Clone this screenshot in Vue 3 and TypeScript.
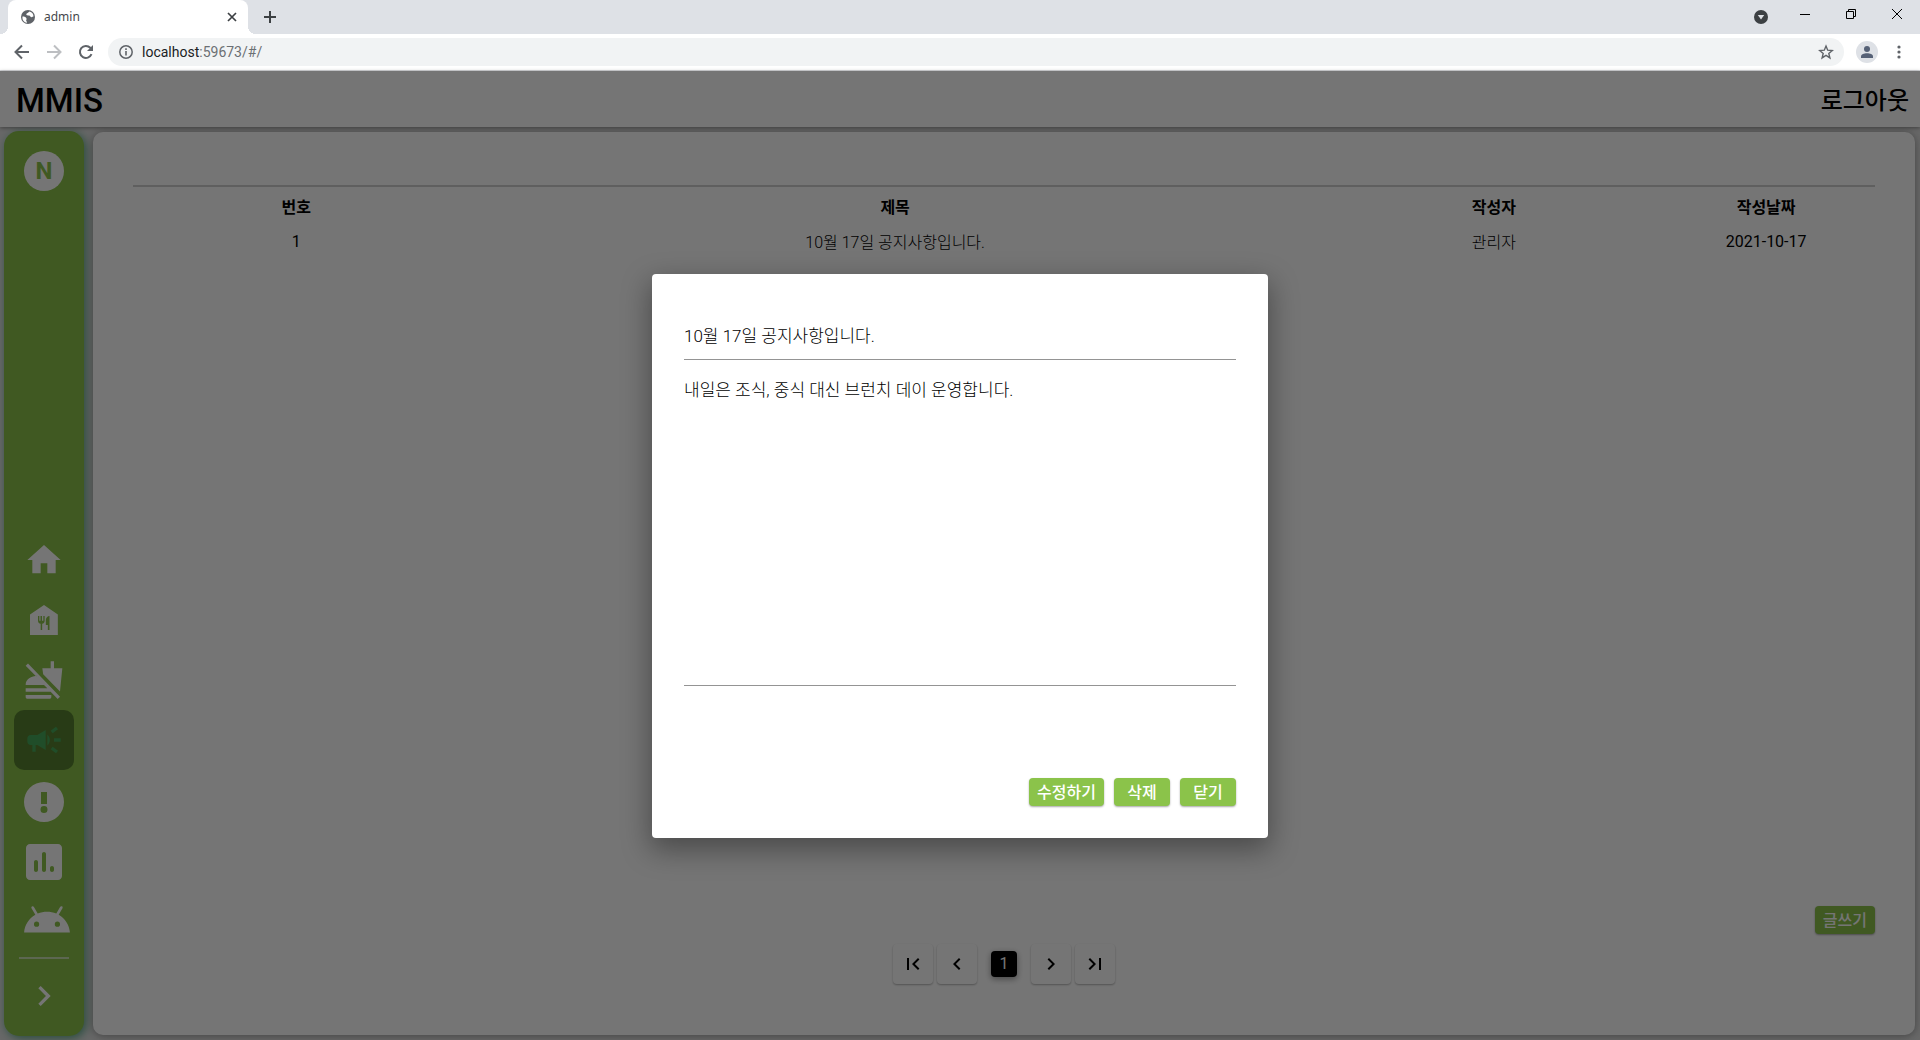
<script setup lang="ts">
import { ref } from 'vue'

interface NavItem {
  id: string
  label: string
  path: string
}

interface Notice {
  no: number
  title: string
  author: string
  date: string
}

const navItems: NavItem[] = [
  { id: 'home', label: '홈', path: 'M10 20v-6h4v6h5v-8h3L12 3 2 12h3v8z' },
  {
    id: 'house',
    label: '식당',
    path: 'M12 3 3.600 8.700V21h16.700V8.700zM12.400 12.400c0 1-.7 1.800-1.500 1.900V18h-.9v-3.700c-.8-.1-1.600-.9-1.600-1.900V9.600h.8v2.800h.7V9.600h.9v2.800h.8V9.600h.8zM15.300 18h-1v-3h-1.200v-3c0-1.200 1-2.400 2.200-2.400z',
  },
  {
    id: 'nofood',
    label: '결식',
    path: 'M1 22.200c0 .6.500 1.100 1.100 1.100H15.300c.6 0 1.100-.5 1.100-1.100V21H1zM8.200 9.500C4.300 9.700 1 11.500 1 15H12l2 2H1v2H16L20.200 23.400l1.400-1.400L2.400 2.100 1 3.500 7.200 9.700zM11.500 8.500 11 5H16V.800h2V5h5l-1.400 13.900z',
  },
  {
    id: 'notice',
    label: '공지사항',
    path: 'M18 11v2h4v-2zM16 17.610c.960.710 2.210 1.650 3.200 2.390.400-.530.800-1.070 1.200-1.600-.990-.740-2.240-1.680-3.200-2.400-.400.540-.800 1.080-1.200 1.610zM20.400 5.600c-.400-.530-.800-1.070-1.200-1.600-.990.740-2.240 1.680-3.200 2.400.400.530.800 1.070 1.200 1.600.960-.720 2.210-1.650 3.200-2.400zM4 9c-1.100 0-2 .900-2 2v2c0 1.100.900 2 2 2h1v4h2v-4h1l5 3V6L8 9zM15.500 12c0-1.330-.580-2.530-1.500-3.350v6.690c.920-.810 1.500-2.010 1.500-3.340z',
  },
  {
    id: 'alert',
    label: '신고',
    path: 'M12 0a12 12 0 1 0 0 24 12 12 0 1 0 0-24zM10.200 6h3.600v7.200h-3.600zM12 14.400a2.100 2.100 0 1 1 0 4.200 2.100 2.100 0 1 1 0-4.200z',
  },
  {
    id: 'stats',
    label: '통계',
    path: 'M19 3H5c-1.100 0-2 .900-2 2v14c0 1.100.900 2 2 2h14c1.100 0 2-.900 2-2V5c0-1.100-.900-2-2-2zM8 17c-.550 0-1-.450-1-1v-4c0-.550.450-1 1-1s1 .450 1 1v4c0 .550-.450 1-1 1zm4 0c-.550 0-1-.450-1-1V8c0-.550.450-1 1-1s1 .450 1 1v8c0 .550-.450 1-1 1zm4 0c-.550 0-1-.450-1-1v-1c0-.550.450-1 1-1s1 .450 1 1v1c0 .550-.450 1-1 1z',
  },
  {
    id: 'android',
    label: '안드로이드',
    path: 'M17.600 9.480l1.840-3.180c.160-.310.040-.690-.260-.850-.290-.150-.650-.060-.830.220l-1.880 3.240c-2.860-1.210-6.080-1.210-8.940 0L5.650 5.670c-.190-.290-.580-.380-.870-.200-.280.180-.370.540-.220.830L6.400 9.480C3.300 11.250 1.280 14.440 1 18h22c-.280-3.560-2.300-6.750-5.400-8.520zM7 15.250a1.250 1.250 0 1 1 0-2.500 1.250 1.250 0 1 1 0 2.500zM17 15.250a1.250 1.250 0 1 1 0-2.500 1.250 1.250 0 1 1 0 2.500z',
  },
]

const notices: Notice[] = [
  { no: 1, title: '10월 17일 공지사항입니다.', author: '관리자', date: '2021-10-17' },
]

const active = ref('notice')
const url = ref('localhost:59673/#/')
const title = ref('10월 17일 공지사항입니다.')
const body = ref('내일은 조식, 중식 대신 브런치 데이 운영합니다.')
</script>

<template>
  <div class="browser">
    <div class="tabstrip">
      <div class="tab">
        <svg class="favicon" viewBox="0 0 16 16"><circle cx="8" cy="8" r="7" fill="#5f6368" /><path d="M2.500 7.500c2 0 3.500.500 4 2 .300 1-.500 1.300-.300 2.300.100.800 1 .800.800 2C4 13.500 2 11 2.500 7.500zM9.500 2.500C8.500 4 6.500 3.800 6.300 5.300c-.100 1.200 1.500 1.200 2.700 1.200 1.300 0 1.200 1.700 2.500 1.700 1 0 1.300-.700 2-.700C13.600 5 12 3 9.500 2.500z" fill="#fff" /></svg>
        <span class="tab-title">admin</span>
        <button class="plain tab-close" aria-label="탭 닫기">
          <svg width="10" height="10" viewBox="0 0 10 10"><path d="M1 1l8 8M9 1l-8 8" stroke="#3c4043" stroke-width="1.700" /></svg>
        </button>
      </div>
      <button class="plain new-tab" aria-label="새 탭">
        <svg width="12" height="12" viewBox="0 0 12 12"><path d="M6 0v12M0 6h12" stroke="#3c4043" stroke-width="2" /></svg>
      </button>
      <div class="window-controls">
        <button class="plain tab-search" aria-label="탭 검색">
          <svg width="14" height="14" viewBox="0 0 14 14"><circle cx="7" cy="7" r="7" fill="#3c4043" /><path d="M3.800 5h6.400L7 9.500z" fill="#dee1e6" /></svg>
        </button>
        <button class="plain raised" aria-label="최소화">
          <svg width="10" height="10" viewBox="0 0 10 10"><path d="M0 5.500h10" stroke="#000" /></svg>
        </button>
        <button class="plain raised" aria-label="이전 크기로">
          <svg width="10" height="10" viewBox="0 0 10 10" fill="none" stroke="#000"><path d="M.5 2.500h7v7h-7zM2.500 2.500v-2h7v7h-2" /></svg>
        </button>
        <button class="plain raised" aria-label="창 닫기">
          <svg width="10" height="10" viewBox="0 0 10 10"><path d="M0 0l10 10M10 0L0 10" stroke="#000" /></svg>
        </button>
      </div>
    </div>

    <div class="toolbar">
      <button class="plain" aria-label="뒤로"><svg width="16" height="16" viewBox="0 0 16 16"><path d="M15 8H2M8 1.500L1.500 8 8 14.500" fill="none" stroke="#5f6368" stroke-width="2" /></svg></button>
      <button class="plain" aria-label="앞으로"><svg width="16" height="16" viewBox="0 0 16 16"><path d="M1 8h13M8 1.500L14.500 8 8 14.500" fill="none" stroke="#bdbfc2" stroke-width="2" /></svg></button>
      <button class="plain" aria-label="새로고침"><svg width="16" height="16" viewBox="0 0 16 16"><path d="M13.500 10.200A6 6 0 1 1 12.300 3.800L13.500 5" fill="none" stroke="#5f6368" stroke-width="2" /><path d="M15 1v6H9z" fill="#5f6368" /></svg></button>
      <div class="omnibox">
        <svg width="14" height="14" viewBox="0 0 14 14"><circle cx="7" cy="7" r="6.200" fill="none" stroke="#5f6368" stroke-width="1.500" /><path d="M6.200 6h1.600v4.500H6.200zM6.200 3.300h1.600v1.600H6.200z" fill="#5f6368" /></svg>
        <a class="address" :href="'http://' + url"><span class="host">localhost</span>:59673/#/</a>
        <button class="plain" aria-label="북마크">
          <svg width="16" height="16" viewBox="0 0 16 16"><path d="M8 2l1.700 4.200 4.600.300-3.500 2.900 1.100 4.500L8 11.400l-3.900 2.500 1.100-4.500L1.700 6.500l4.600-.300z" fill="none" stroke="#5f6368" stroke-width="1.400" /></svg>
        </button>
      </div>
      <button class="plain avatar" aria-label="프로필">
        <svg width="22" height="22" viewBox="0 0 22 22"><circle cx="11" cy="11" r="11" fill="#dee1e6" /><circle cx="11" cy="8" r="3" fill="#566176" /><path d="M5 17v-1.500c0-2 3-3.200 6-3.200s6 1.200 6 3.200V17z" fill="#566176" /></svg>
      </button>
      <button class="plain menu" aria-label="메뉴">
        <svg width="4" height="14" viewBox="0 0 4 14" fill="#5f6368"><circle cx="2" cy="2" r="1.600" /><circle cx="2" cy="7" r="1.600" /><circle cx="2" cy="12" r="1.600" /></svg>
      </button>
    </div>

    <div class="page">
      <header class="app-bar">
        <h1>MMIS</h1>
        <button class="plain logout">로그아웃</button>
      </header>

      <div class="workspace">
        <nav class="sidebar">
          <div class="badge">N</div>
          <div class="nav-list">
            <button
              v-for="item in navItems"
              :key="item.id"
              class="plain nav-item"
              :class="[item.id, { active: item.id === active }]"
              :aria-label="item.label"
              @click="active = item.id"
            >
              <svg viewBox="0 0 24 24"><path :d="item.path" fill="currentColor" fill-rule="evenodd" /></svg>
            </button>
          </div>
          <hr />
          <button class="plain expand" aria-label="펼치기">
            <svg width="40" height="40" viewBox="0 0 24 24"><path d="M10 6L8.590 7.410 13.170 12l-4.580 4.590L10 18l6-6z" fill="currentColor" /></svg>
          </button>
        </nav>

        <main class="board">
          <table>
            <colgroup>
              <col class="c-no" /><col class="c-title" /><col class="c-author" /><col class="c-date" />
            </colgroup>
            <thead>
              <tr><th>번호</th><th>제목</th><th>작성자</th><th>작성날짜</th></tr>
            </thead>
            <tbody>
              <tr v-for="n in notices" :key="n.no">
                <td class="numeric">{{ n.no }}</td><td>{{ n.title }}</td><td>{{ n.author }}</td><td class="numeric">{{ n.date }}</td>
              </tr>
            </tbody>
          </table>
          <div class="write-row"><button class="action">글쓰기</button></div>
          <div class="pager">
            <button aria-label="처음"><svg viewBox="0 0 24 24"><path d="M18.410 16.590L13.820 12l4.590-4.590L17 6l-6 6 6 6zM6 6h2v12H6z" /></svg></button>
            <button aria-label="이전"><svg viewBox="0 0 24 24"><path d="M15.410 7.410L14 6l-6 6 6 6 1.410-1.410L10.830 12z" /></svg></button>
            <button class="current">1</button>
            <button aria-label="다음"><svg viewBox="0 0 24 24"><path d="M10 6L8.590 7.410 13.170 12l-4.580 4.590L10 18l6-6z" /></svg></button>
            <button aria-label="마지막"><svg viewBox="0 0 24 24"><path d="M5.590 7.410L10.180 12l-4.590 4.590L7 18l6-6-6-6zM16 6h2v12h-2z" /></svg></button>
          </div>
        </main>
      </div>

      <div class="scrim">
        <section class="dialog" role="dialog" aria-label="공지사항">
          <input v-model="title" aria-label="제목" />
          <textarea v-model="body" aria-label="내용"></textarea>
          <div class="dialog-actions">
            <button class="action">수정하기</button>
            <button class="action">삭제</button>
            <button class="action">닫기</button>
          </div>
        </section>
      </div>
    </div>
  </div>
</template>

<style>
body {
  margin: 0;
}
</style>

<style scoped>
* {
  box-sizing: border-box;
}
.browser {
  display: flex;
  flex-direction: column;
  height: 100vh;
  overflow: hidden;
  font: 400 16px/24px Roboto, "Noto Sans CJK KR", sans-serif;
  color: #000;
}
button,
input,
textarea {
  font: inherit;
  color: inherit;
}
svg {
  display: block;
}
.plain {
  display: flex;
  align-items: center;
  justify-content: center;
  border: 0;
  padding: 0;
  background: none;
}

/* browser frame */
.tabstrip {
  display: flex;
  flex: none;
  height: 34px;
  padding-left: 8px;
  background: #dee1e6;
}
.tab {
  position: relative;
  display: flex;
  align-items: center;
  width: 240px;
  padding: 0 11px 0 12px;
  border-radius: 8px 8px 0 0;
  background: #fff;
}
.tab::before,
.tab::after {
  content: "";
  position: absolute;
  bottom: 0;
  width: 8px;
  height: 8px;
}
.tab::before {
  left: -8px;
  background: radial-gradient(circle at 0 0, #dee1e6 8px, #fff 8px);
}
.tab::after {
  right: -8px;
  background: radial-gradient(circle at 100% 0, #dee1e6 8px, #fff 8px);
}
.favicon {
  width: 16px;
  height: 16px;
}
.tab-title {
  flex: 1;
  margin-left: 8px;
  font: 12px/16px "Noto Sans", sans-serif;
  color: #45484c;
}
.new-tab {
  width: 28px;
  margin-left: 8px;
}
.window-controls {
  display: flex;
  margin-left: auto;
}
.window-controls .plain {
  width: 46px;
}
.window-controls .tab-search {
  width: 42px;
}
.window-controls .raised {
  padding-bottom: 6px;
}
.toolbar {
  display: flex;
  flex: none;
  align-items: center;
  gap: 16px;
  height: 37px;
  padding: 0 16px 0 14px;
  border-bottom: 1px solid #d5d7da;
  background: #fff;
}
.omnibox {
  display: flex;
  flex: 1;
  align-items: center;
  gap: 9px;
  height: 28px;
  margin: 0 -4px 0 -2px;
  padding: 0 10px 0 11px;
  border-radius: 14px;
  background: #f1f3f4;
}
.address {
  flex: 1;
  font: 14px/20px Roboto, sans-serif;
  color: #6b6f73;
  text-decoration: none;
}
.host {
  color: #202124;
}
.menu {
  width: 10px;
}

/* application */
.page {
  position: relative;
  display: flex;
  flex: 1;
  flex-direction: column;
  min-height: 0;
  background: #e2e2e2;
}
.app-bar {
  position: relative;
  display: flex;
  flex: none;
  align-items: center;
  justify-content: space-between;
  height: 56px;
  padding: 3px 11px 0 16px;
  background: #fff;
  box-shadow: 0 1px 4px rgba(0, 0, 0, 0.4);
}
h1 {
  margin: 0;
  font-size: 33px;
  font-weight: 500;
  line-height: 40px;
}
.logout {
  font-size: 24px;
  font-weight: 500;
}
.workspace {
  display: flex;
  flex: 1;
  gap: 9px;
  min-height: 0;
  padding: 4px 5px 4px 4px;
}
.sidebar {
  display: flex;
  flex: none;
  flex-direction: column;
  align-items: center;
  width: 80px;
  padding: 20px 0;
  border-radius: 15px;
  background: #8bc34a;
  box-shadow: 2px 2px 10px #55a583;
  color: #fff;
}
.badge {
  width: 40px;
  height: 40px;
  border-radius: 50%;
  background: #fff;
  color: #8bc34a;
  font-size: 24px;
  font-weight: 700;
  line-height: 41px;
  text-align: center;
}
.nav-list {
  display: flex;
  flex-direction: column;
  margin-top: auto;
}
.nav-item {
  width: 60px;
  height: 60px;
  border-radius: 10px;
}
.nav-item svg {
  width: 40px;
  height: 40px;
}
.nav-item.alert {
  height: 64px;
}
.nav-item.stats {
  height: 56px;
}
.nav-item.stats svg {
  width: 48px;
  height: 48px;
}
.nav-item.active {
  background: #588230;
  color: #46a85a;
}
.nav-item.android svg {
  width: 50px;
  height: 50px;
  margin-left: 5px;
}
.sidebar hr {
  width: 50px;
  height: 2px;
  margin: 7px 0 17px;
  border: 0;
  background: #c8e0b0;
}
.board {
  display: flex;
  flex: 1;
  flex-direction: column;
  margin: 1px 0;
  padding: 53px 40px 51px;
  border-radius: 10px;
  background: #fff;
  box-shadow: 0 1px 8px rgba(0, 0, 0, 0.35);
}
table {
  width: 100%;
  border-top: 2px solid #d0d0d0;
  border-collapse: separate;
  border-spacing: 0;
  table-layout: fixed;
}
.c-no,
.c-author {
  width: 18.75%;
}
.c-title {
  width: 50%;
}
th,
td {
  padding: 0;
  text-align: center;
}
th {
  height: 42px;
  font-weight: 700;
}
td {
  height: 28px;
  font-weight: 300;
}
td.numeric {
  padding-bottom: 2px;
  font-weight: 400;
}
.write-row {
  display: flex;
  justify-content: flex-end;
  margin-top: auto;
}
.action {
  min-width: 56px;
  height: 28px;
  padding: 2px 8px 0;
  border: 0;
  border-radius: 4px;
  background: #8bc34a;
  box-shadow: 0 1px 2px rgba(0, 0, 0, 0.35);
  color: #fff;
  font-weight: 500;
  line-height: 26px;
}
.pager {
  display: flex;
  align-items: center;
  justify-content: center;
  gap: 4px;
  margin-top: 10px;
}
.pager button {
  display: flex;
  align-items: center;
  justify-content: center;
  width: 40px;
  height: 40px;
  padding: 0;
  border: 0;
  border-radius: 4px;
  background: #fff;
  box-shadow: 0 1px 2px rgba(0, 0, 0, 0.3);
}
.pager svg {
  width: 24px;
  height: 24px;
}
.pager .current {
  width: 26px;
  height: 26px;
  margin: 0 10px;
  background: #000;
  box-shadow: 0 2px 6px rgba(0, 0, 0, 0.4);
  color: #fff;
}

/* modal */
.scrim {
  position: absolute;
  inset: 0;
  display: flex;
  align-items: center;
  justify-content: center;
  background: rgba(0, 0, 0, 0.54);
}
.dialog {
  display: flex;
  flex-direction: column;
  width: 616px;
  padding: 32px;
  border-radius: 4px;
  background: #fff;
  box-shadow: 0 10px 28px 2px rgba(0, 0, 0, 0.36);
  color: #000;
}
.dialog input,
.dialog textarea {
  display: block;
  width: 100%;
  border: 0;
  border-bottom: 1px solid #949494;
  border-radius: 0;
  outline: 0;
  background: none;
  font-size: 17px;
  font-weight: 300;
  line-height: 24px;
}
.dialog input {
  height: 54px;
  padding: 4px 0 0;
}
.dialog textarea {
  height: 326px;
  padding: 18px 0;
  resize: none;
}
.dialog-actions {
  display: flex;
  justify-content: flex-end;
  gap: 10px;
  margin-top: 92px;
}
</style>
